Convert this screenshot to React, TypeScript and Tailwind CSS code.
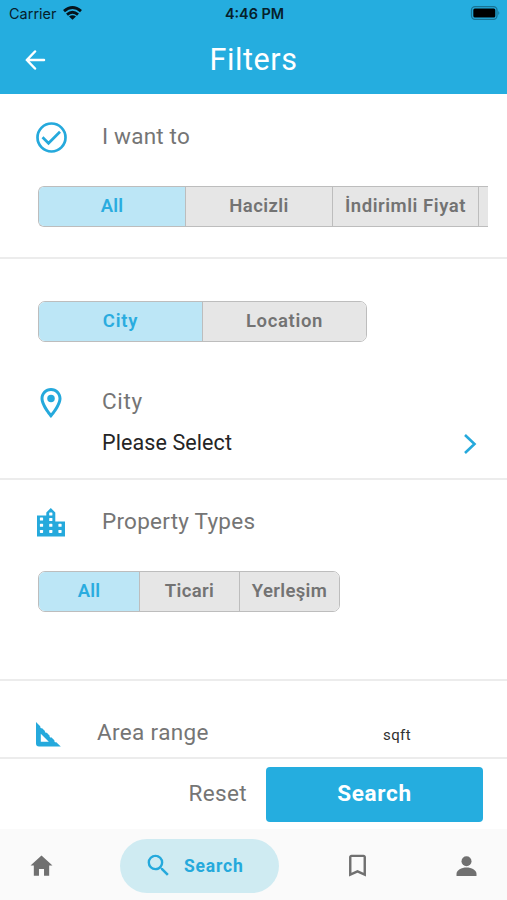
import React from 'react';
import { MdBookmarkBorder, MdOutlineLocationOn, MdSearch } from 'react-icons/md';
import { IoMdHome } from 'react-icons/io';

function Segment({ label, className, active = false }: { label: string; className: string; active?: boolean }) {
  return (
    <button
      className={`flex shrink-0 items-center justify-center whitespace-nowrap border-r border-[#bdbdbd] text-[18.5px] font-semibold last:border-r-0 ${active ? 'bg-[#bce6f6] text-[#2aacdf]' : 'bg-[#e6e6e6] text-[#737373]'} ${className}`}
    >
      {label}
    </button>
  );
}

function StatusBar() {
  return (
    <div className="grid h-[27px] grid-cols-3 items-center pl-[9px] pr-[7px] text-[#06202b]">
      <div className="flex items-center gap-[6px] font-['Inter'] text-[14.4px]">
        <span className="tracking-[0.05px]">Carrier</span>
        <svg className="-mt-[1px]" width="19" height="14" viewBox="0 0 19 14" fill="none" stroke="#06141b" strokeWidth="2.9">
          <path d="M1 5.2Q9.500-2 18 5.200M4 8.700Q9.500 4 15 8.700" />
          <path d="M9.500 13.800 6 10.500Q9.500 8 13 10.500Z" fill="#06141b" stroke="none" />
        </svg>
      </div>
      <div className="text-center font-['Inter'] text-[14.4px] font-semibold">4:46 PM</div>
      <svg className="-mt-[1px] justify-self-end" width="30" height="14" viewBox="0 0 30 14">
        <rect x="1.5" y="0.7" width="25.500" height="12.6" rx="3.5" fill="none" stroke="#187394" strokeWidth="1.3" />
        <rect x="3.3" y="2.5" width="22" height="9" rx="1.5" fill="#000" />
        <path d="M28.300 5v4q2-2 0-4z" fill="#187394" />
      </svg>
    </div>
  );
}

const WINDOWS = [
  [13.8, 6],
  [4.5, 11],
  [13.8, 11.5],
  [4.5, 17.3],
  [13.8, 17.3],
  [23, 17.3],
  [4.5, 23.4],
  [13.8, 23.4],
  [23, 23.4],
];

function BuildingsIcon() {
  return (
    <svg className="-ml-[1px]" width="28" height="29" viewBox="0 0 28 29">
      <path d="M0 7.500h9.300V4.500L13.800 0l4.500 4.500v9H28V28.500H0z" fill="#25a9dc" />
      {WINDOWS.map(([x, y]) => (
        <rect key={`${x}-${y}`} x={x - 1.6} y={y - 1.5} width="3.2" height="3" rx="0.6" fill="#fff" />
      ))}
    </svg>
  );
}

function SetSquareIcon() {
  return (
    <svg className="mt-[2px]" width="25" height="25" viewBox="0 0 25 25" fill="#25a9dc">
      <path
        fillRule="evenodd"
        d="M0 0l4.500 4.500-.5.500 1.400 1.400.5-.5 3.300 3.300-.5.5 1.400 1.400.5-.5 3.300 3.300-.5.5 1.400 1.400.5-.5 3.300 3.300-.5.5 1.400 1.400.5-.5L24.800 24.600H3Q0 24.600 0 21.600zM4.800 11.800V19.800H12.800z"
      />
    </svg>
  );
}

export default function App() {
  return (
    <div className="flex h-[900px] w-[507px] flex-col overflow-hidden bg-white font-['Roboto',sans-serif] text-[#757575]">
      <header className="h-[94px] shrink-0 bg-[#25addf]">
        <StatusBar />
        <div className="grid h-[65px] grid-cols-[1fr_auto_1fr] items-center text-white">
          <svg className="ml-[25px]" width="21" height="20" viewBox="0 0 21 20" fill="none" stroke="currentColor" strokeWidth="2.5" strokeLinecap="round" strokeLinejoin="round">
            <path d="M10 1.500 1.800 10l8.200 8.500M2 10h17" />
          </svg>
          <h1 className="pt-[1px] text-[30.5px] leading-none tracking-[0.6px]">Filters</h1>
          <span />
        </div>
      </header>

      <main className="flex h-[663px] shrink-0 flex-col overflow-hidden">
        <section className="h-[165px] shrink-0 border-b-2 border-[#ececec] pl-[38px] pr-[19px]">
          <div className="flex h-[92px] items-center pb-[6px]">
            <svg className="-ml-[2px]" width="31" height="31" viewBox="0 0 31 31" fill="none" stroke="#25a9dc" strokeWidth="2.7">
              <circle cx="15.5" cy="15.5" r="14" />
              <path d="m6.500 15.300 6 6L24 9.800" />
            </svg>
            <h2 className="ml-[35px] text-[22.5px] tracking-[0.2px]">I want to</h2>
          </div>
          <div className="flex h-[41px] overflow-hidden rounded-l-[6px] border border-r-0 border-[#bdbdbd]">
            <Segment label="All" active className="w-[147px] tracking-[0.1px]" />
            <Segment label="Hacizli" className="w-[147px] tracking-[0.4px]" />
            <Segment label="İndirimli Fiyat" className="w-[146px] tracking-[0.55px]" />
            <span className="flex-1 bg-[#e6e6e6]" />
          </div>
        </section>

        <section className="h-[221px] shrink-0 border-b-2 border-[#ececec] pl-[38px] pr-[30px] pt-[42px]">
          <div className="flex h-[41px] w-[329px] overflow-hidden rounded-[7px] border border-[#bdbdbd]">
            <Segment label="City" active className="w-[164px] tracking-[0.8px]" />
            <Segment label="Location" className="flex-1 tracking-[0.65px]" />
          </div>
          <div className="mt-[44px] flex h-[32px] items-center">
            <MdOutlineLocationOn className="-ml-[5px] mt-[1px] text-[#25a9dc]" size={36} />
            <h2 className="ml-[33px] text-[22.5px] tracking-[0.7px]">City</h2>
          </div>
          <button className="mt-[9px] flex h-[34px] w-full items-center justify-between pl-[64px] text-[#252525]">
            <span className="pb-[2px] text-[21.5px] tracking-[0.1px]">Please Select</span>
            <svg width="14" height="22" viewBox="0 0 14 22" fill="none" stroke="#25a9dc" strokeWidth="2.6">
              <path d="m2 2 9.500 9L2 20" />
            </svg>
          </button>
        </section>

        <section className="h-[201px] shrink-0 border-b-2 border-[#ececec] pl-[38px] pt-[24px]">
          <div className="flex h-[36px] items-center">
            <BuildingsIcon />
            <h2 className="ml-[37px] pb-[2px] text-[22.5px] leading-none tracking-[0.25px]">Property Types</h2>
          </div>
          <div className="mt-[31px] flex h-[41px] w-[302px] overflow-hidden rounded-[7px] border border-[#bdbdbd]">
            <Segment label="All" active className="w-[101px] tracking-[0.1px]" />
            <Segment label="Ticari" className="w-[100px] tracking-[0.4px]" />
            <Segment label="Yerleşim" className="flex-1 tracking-[0.35px]" />
          </div>
        </section>

        <section className="flex h-[76px] shrink-0 items-center pl-[36px] pt-[28px]">
          <SetSquareIcon />
          <h2 className="ml-[36px] w-[286px] text-[22.5px] tracking-[0.35px]">Area range</h2>
          <span className="mt-[4px] text-[15px] tracking-[0.4px] text-[#303030]">sqft</span>
        </section>
      </main>

      <div className="flex h-[72px] shrink-0 items-center justify-end border-t-2 border-[#ececec] pr-[24px]">
        <button className="mr-[19px] text-[22.5px] tracking-[0.35px]">Reset</button>
        <button className="h-[55px] w-[217px] rounded-[4px] bg-[#25addf] pb-[1px] text-[22.5px] font-bold tracking-[0.7px] text-white">Search</button>
      </div>

      <nav className="flex h-[71px] shrink-0 items-center bg-[#fafafa] pl-[28px] text-[#707070]">
        <IoMdHome className="mt-[2px]" size={27} />
        <button className="ml-[65px] mt-[2px] flex h-[54px] w-[159px] items-center rounded-full bg-[#cfebf2] pl-[24px] text-[#25a9dc]">
          <MdSearch size={29} />
          <span className="ml-[11px] pt-[1px] text-[17.5px] font-bold tracking-[0.8px]">Search</span>
        </button>
        <MdBookmarkBorder className="ml-[64px] mt-[2px]" size={29} />
        <svg className="ml-[84px] mt-[3px]" width="21" height="21" viewBox="0 0 21 21" fill="currentColor">
          <circle cx="10.5" cy="5.3" r="5" />
          <path d="M.5 18c0-4 5-6.500 10-6.500s10 2.500 10 6.500v2H.5z" />
        </svg>
      </nav>
    </div>
  );
}
